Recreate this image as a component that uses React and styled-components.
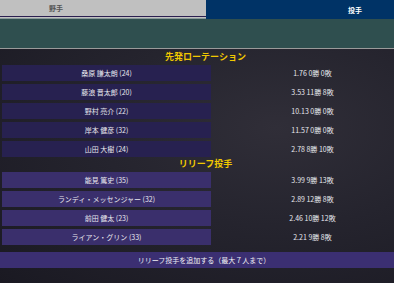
import React from "react";
import styled, { createGlobalStyle } from "styled-components";

const GlobalStyle = createGlobalStyle`
  html, body {
    margin: 0;
    padding: 0;
    background: #1c1b24;
  }
  body {
    font-family: "Noto Sans CJK JP", "Noto Sans", sans-serif;
  }
`;

const starters = [
  { name: "桑原 謙太朗 (24)", stat: "1.76 0勝 0敗" },
  { name: "藤浪 晋太郎 (20)", stat: "3.53 11勝 8敗" },
  { name: "野村 亮介 (22)", stat: "10.13 0勝 0敗" },
  { name: "岸本 健彦 (32)", stat: "11.57 0勝 0敗" },
  { name: "山田 大樹 (24)", stat: "2.78 8勝 10敗" },
];

const relievers = [
  { name: "能見 篤史 (35)", stat: "3.99 9勝 13敗" },
  { name: "ランディ・メッセンジャー (32)", stat: "2.89 12勝 8敗" },
  { name: "前田 健太 (23)", stat: "2.46 10勝 12敗" },
  { name: "ライアン・グリン (33)", stat: "2.21 9勝 8敗" },
];

const App = () => {
  return (
    <>
      <GlobalStyle />
      <Page>
        <Tabs>
          <Tab>野手</Tab>
          <Tab active>投手</Tab>
        </Tabs>
        <Banner />
        <Content>
          <Heading>先発ローテーション</Heading>
          <List>
            {starters.map((p) => (
              <Row key={p.name}>
                <NameCell kind="starter">{p.name}</NameCell>
                <StatCell>{p.stat}</StatCell>
              </Row>
            ))}
          </List>
          <Heading>リリーフ投手</Heading>
          <List>
            {relievers.map((p) => (
              <Row key={p.name}>
                <NameCell kind="relief">{p.name}</NameCell>
                <StatCell>{p.stat}</StatCell>
              </Row>
            ))}
          </List>
        </Content>
        <AddButton>リリーフ投手を追加する（最大７人まで）</AddButton>
      </Page>
    </>
  );
};

const Page = styled.div`
  width: 394px;
  height: 283px;
  overflow: hidden;
  background: radial-gradient(
    ellipse at 70% 45%,
    #302e38 0%,
    #25242e 45%,
    #1a1922 100%
  );
`;

const Tabs = styled.div`
  display: flex;
  background: #c0c0c0;
`;

const Tab = styled.div`
  box-sizing: border-box;
  height: ${({ active }) => (active ? "19px" : "17px")};
  display: flex;
  align-items: center;
  font-size: 7px;
  font-weight: bold;
  color: ${({ active }) => (active ? "#ffffff" : "#555555")};
  background: ${({ active }) => (active ? "#003366" : "#c0c0c0")};
  width: ${({ active }) => (active ? "188px" : "206px")};
  padding-left: ${({ active }) => (active ? "142px" : "49px")};
  border-bottom: ${({ active }) => (active ? "none" : "1px solid #2a1f4f")};
`;

const Banner = styled.div`
  height: 29px;
  background: #2f4f4f;
  border-top: 1px solid #8a9a9a;
  border-bottom: 1px solid #9a9a9a;
  margin-top: -1px;
`;

const Content = styled.div`
  padding: 1px 0 0 0;
`;

const Heading = styled.div`
  padding-left: 17px;
  text-align: center;
  font-size: 9px;
  font-weight: bold;
  color: #f0c800;
  line-height: 14px;
  height: 14px;
`;

const List = styled.div`
  display: flex;
  flex-direction: column;
  gap: 3px;
  padding-top: 1px;
`;

const Row = styled.div`
  display: flex;
  height: 16px;
  align-items: stretch;
`;

const NameCell = styled.div`
  margin-left: 2px;
  width: 209px;
  display: flex;
  align-items: center;
  justify-content: center;
  font-size: 7px;
  color: #e8e8ee;
  background: ${({ kind }) => (kind === "relief" ? "#3a2f6c" : "#272150")};
`;

const StatCell = styled.div`
  flex: 1;
  display: flex;
  align-items: center;
  justify-content: center;
  padding-left: 20px;
  font-size: 7px;
  color: #e8e8ee;
`;

const AddButton = styled.div`
  margin-top: 7px;
  height: 16px;
  display: flex;
  align-items: center;
  justify-content: center;
  padding-left: 14px;
  font-size: 7px;
  color: #f0f0f4;
  background: #3b2f72;
`;

export default App;
